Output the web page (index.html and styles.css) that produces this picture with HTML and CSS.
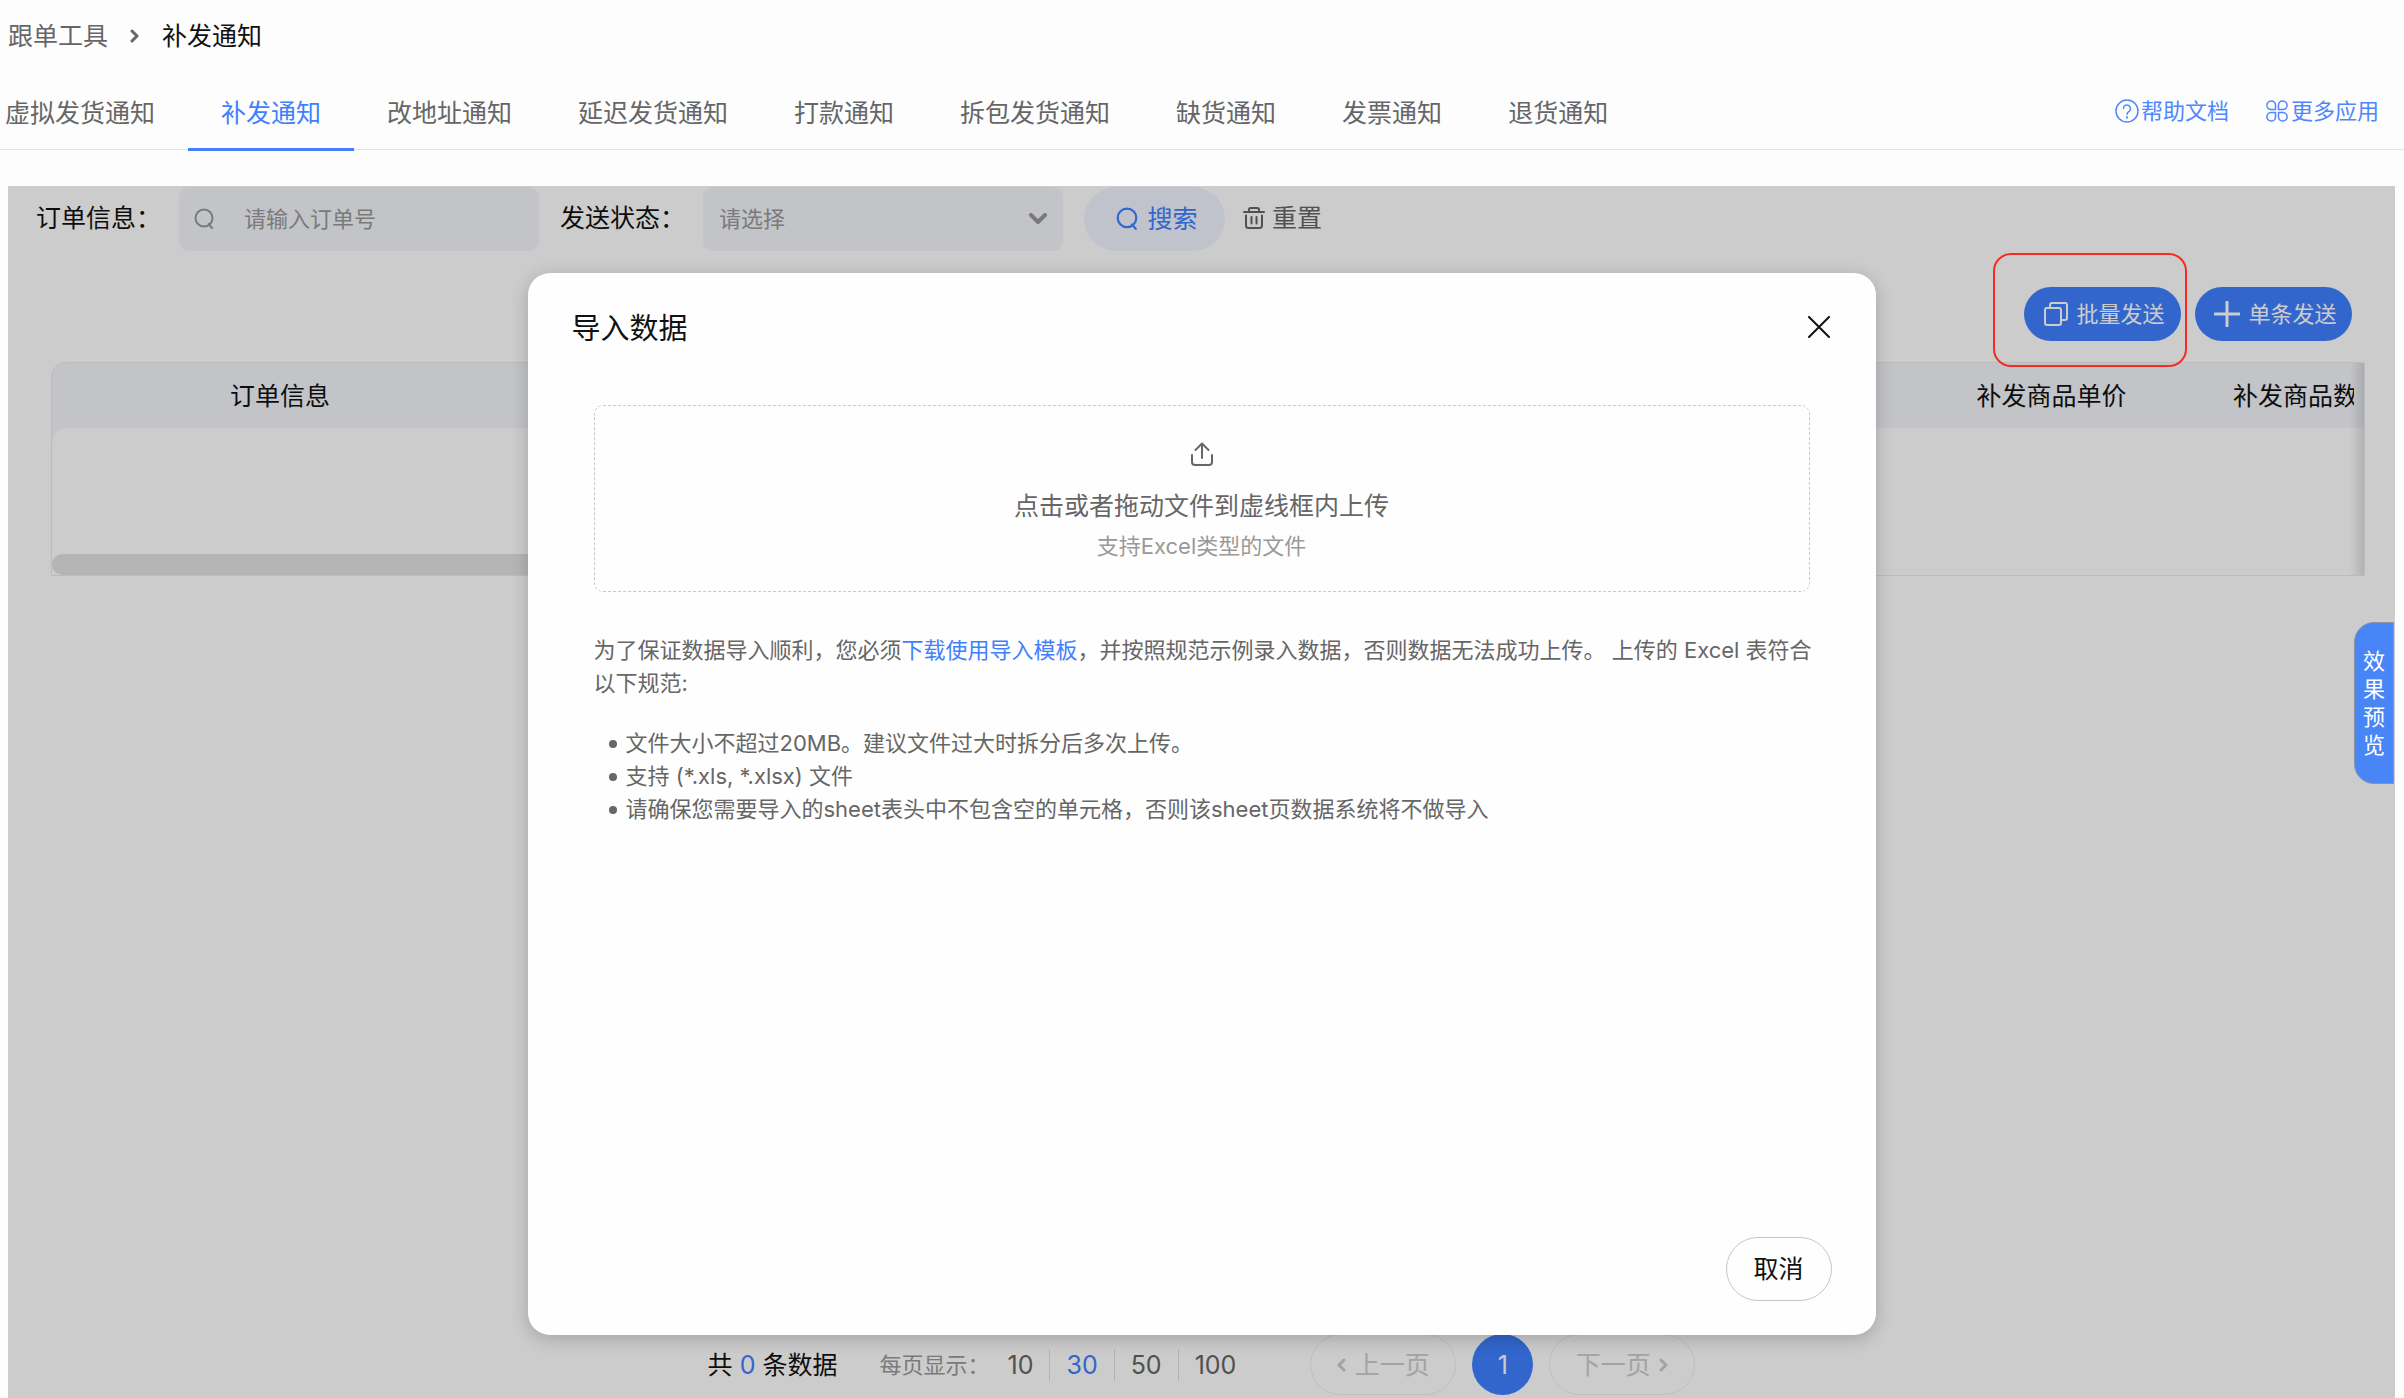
FILE: index.html
```
<!DOCTYPE html>
<html lang="zh-CN">
<head>
    <meta charset="UTF-8">
    <meta name="viewport" content="width=device-width, initial-scale=1.0">
    <title>补发通知</title>
    <link rel="stylesheet" href="styles.css">
</head>
<body>

<!-- Breadcrumb -->
<nav class="breadcrumb">
    <a href="#">跟单工具</a>
    <svg class="icon-arrow" viewBox="0 0 10 14"><path d="M2 2l5 5-5 5"/></svg>
    <span class="current">补发通知</span>
</nav>

<!-- Top tabs -->
<div class="tab-bar">
    <nav class="tabs">
        <a href="#" class="tab">虚拟发货通知</a>
        <a href="#" class="tab active">补发通知</a>
        <a href="#" class="tab">改地址通知</a>
        <a href="#" class="tab">延迟发货通知</a>
        <a href="#" class="tab">打款通知</a>
        <a href="#" class="tab">拆包发货通知</a>
        <a href="#" class="tab">缺货通知</a>
        <a href="#" class="tab">发票通知</a>
        <a href="#" class="tab">退货通知</a>
    </nav>
    <div class="tab-links">
        <a href="#">
            <svg class="icon-help" viewBox="0 0 24 24"><circle cx="12" cy="12" r="11"/><path d="M8.500 9.500a3.500 3.500 0 1 1 5.500 2.800c-1.300.9-2 1.500-2 3"/><path d="M12 17.500v1.800"/></svg>帮助文档
        </a>
        <a href="#">
            <svg class="icon-apps" viewBox="0 0 24 24"><path d="M10.500 10.500H6A4.300 4.300 0 1 1 10.500 6zM13.500 10.500V6A4.300 4.300 0 1 1 18 10.500zM10.500 13.500V18A4.300 4.300 0 1 1 6 13.500zM13.500 13.500H18A4.300 4.300 0 1 1 13.500 18z"/></svg>更多应用
        </a>
    </div>
</div>

<main class="panel">
    <!-- Filters -->
    <form class="filters">
        <label for="order-no">订单信息：</label>
        <div class="field search-field">
            <svg class="icon-search" viewBox="0 0 20 22"><circle cx="10" cy="10" r="8.500"/><path d="M14.500 16l3.500 4"/></svg>
            <input type="text" id="order-no" placeholder="请输入订单号">
        </div>
        <label for="status">发送状态：</label>
        <div class="field select-field">
            <select id="status">
                <option>请选择</option>
            </select>
            <svg class="icon-down" viewBox="0 0 18 12"><path d="M2 2l7 7 7-7"/></svg>
        </div>
        <button type="button" class="btn-search">
            <svg class="icon-search" viewBox="0 0 20 22"><circle cx="10" cy="10" r="8.500"/><path d="M14.500 16l3.500 4"/></svg>搜索
        </button>
        <button type="button" class="btn-reset">
            <svg class="icon-trash" viewBox="0 0 22 24"><path d="M1 6h20M6 6V3.500A1.500 1.500 0 0 1 7.500 2h7A1.500 1.500 0 0 1 16 3.500V6M3 9.500v10A2.500 2.500 0 0 0 5.500 22h11a2.500 2.500 0 0 0 2.500-2.500v-10M8.500 11v6.500M13.500 11v6.500"/></svg>重置
        </button>
    </form>

    <!-- Send buttons -->
    <div class="actions">
        <div class="marked">
            <button type="button" class="btn-primary">
                <svg class="icon-copy" viewBox="0 0 24 24"><rect x="1" y="6" width="16" height="17" rx="2"/><path d="M6 6V3a2 2 0 0 1 2-2h13a2 2 0 0 1 2 2v13a2 2 0 0 1-2 2h-4"/></svg>批量发送
            </button>
        </div>
        <button type="button" class="btn-primary">
            <svg class="icon-plus" viewBox="0 0 26 26"><path d="M13 1v24M1 13h24"/></svg>单条发送
        </button>
    </div>

    <!-- Order table -->
    <div class="table-box">
        <table>
            <colgroup>
                <col class="col-order">
                <col>
                <col class="col-price">
                <col class="col-count">
            </colgroup>
            <thead>
                <tr>
                    <th>订单信息</th>
                    <th></th>
                    <th>补发商品单价</th>
                    <th class="count"><div>补发商品数</div></th>
                </tr>
            </thead>
        </table>
        <div class="table-body">
            <div class="scroll-thumb"></div>
        </div>
    </div>

    <!-- Pagination -->
    <div class="pagination">
        <span class="total">共 <b>0</b> 条数据</span>
        <span class="size-label">每页显示：</span>
        <div class="sizes">
            <button type="button">10</button>
            <button type="button" class="active">30</button>
            <button type="button">50</button>
            <button type="button">100</button>
        </div>
        <div class="pager">
            <button type="button" class="step" disabled><svg class="icon-arrow" viewBox="0 0 10 14"><path d="M7 2L2 7l5 5"/></svg>上一页</button>
            <button type="button" class="page">1</button>
            <button type="button" class="step" disabled>下一页<svg class="icon-arrow" viewBox="0 0 10 14"><path d="M2 2l5 5-5 5"/></svg></button>
        </div>
    </div>

    <!-- Import dialog -->
    <div class="mask">
        <section class="dialog" role="dialog" aria-labelledby="dialog-title">
            <header class="dialog-header">
                <h2 id="dialog-title">导入数据</h2>
                <button type="button" class="btn-close" aria-label="关闭">
                    <svg viewBox="0 0 22 22"><path d="M1 1l20 20M21 1L1 21"/></svg>
                </button>
            </header>
            <div class="dialog-body">
                <label class="upload">
                    <input type="file" accept=".xls,.xlsx">
                    <svg viewBox="0 0 22 24"><path d="M11 16V2M4.500 8L11 1.500 17.500 8M1 13v7a3 3 0 0 0 3 3h14a3 3 0 0 0 3-3v-7"/></svg>
                    <span class="upload-title">点击或者拖动文件到虚线框内上传</span>
                    <span class="upload-tip">支持Excel类型的文件</span>
                </label>
                <div class="rules">
                    <p>为了保证数据导入顺利，您必须<a href="#">下载使用导入模板</a>，并按照规范示例录入数据，否则数据无法成功上传。 上传的 Excel 表符合以下规范:</p>
                    <ul>
                        <li>文件大小不超过20MB。建议文件过大时拆分后多次上传。</li>
                        <li>支持 (*.xls, *.xlsx) 文件</li>
                        <li>请确保您需要导入的sheet表头中不包含空的单元格，否则该sheet页数据系统将不做导入</li>
                    </ul>
                </div>
            </div>
            <footer class="dialog-footer">
                <button type="button" class="btn-cancel">取消</button>
            </footer>
        </section>
    </div>

    <button type="button" class="preview-tab">效果预览</button>
</main>

</body>
</html>
```

FILE: styles.css
```
* {
    box-sizing: border-box;
}

body {
    margin: 0;
    min-height: 100vh;
    display: flex;
    flex-direction: column;
    overflow: hidden;
    background-color: #fdfdfd;
    color: #111;
    font-family: Inter, "Noto Sans CJK SC", sans-serif;
    font-size: 25px;
    line-height: 36px;
}

a {
    color: inherit;
    text-decoration: none;
}

button,
input,
select {
    font: inherit;
    color: inherit;
    border: none;
    background: none;
    padding: 0;
    margin: 0;
}

button {
    display: flex;
    align-items: center;
    justify-content: center;
    white-space: nowrap;
    cursor: pointer;
}

svg {
    flex: none;
    fill: none;
    stroke: currentColor;
    stroke-width: 2;
    stroke-linecap: round;
    stroke-linejoin: round;
}

/* Breadcrumb */
.breadcrumb {
    height: 72px;
    padding-left: 8px;
    display: flex;
    align-items: center;
    gap: 22px;
    color: #666;
}

.breadcrumb .current {
    color: #111;
}

.icon-arrow {
    width: 10px;
    height: 14px;
    stroke-width: 3;
}

/* Tabs */
.tab-bar {
    height: 78px;
    display: flex;
    justify-content: space-between;
    border-bottom: 1px solid #e3e3e3;
}

.tabs {
    display: flex;
}

.tab {
    height: 79px;
    padding: 23px 33px 0;
    color: #666;
    border-bottom: 3px solid transparent;
    white-space: nowrap;
}

.tab:first-child {
    padding-left: 5px;
}

.tab.active {
    color: #4080ff;
    border-bottom-color: #4080ff;
}

.tab-links {
    display: flex;
    align-items: center;
    gap: 36px;
    padding-right: 25px;
    color: #4e86ff;
    font-size: 22px;
}

.tab-links a {
    display: flex;
    align-items: center;
    gap: 2px;
}

.icon-help,
.icon-apps {
    width: 24px;
    height: 24px;
    stroke-width: 1.5;
}

/* Main panel */
.panel {
    position: relative;
    flex: 1;
    margin: 36px 9px 0 8px;
    display: flex;
    flex-direction: column;
    background-color: #fff;
}

.filters {
    display: flex;
    align-items: center;
    padding-left: 28px;
    height: 65px;
}

.filters label {
    padding-bottom: 2px;
}

.field {
    display: flex;
    align-items: center;
    width: 360px;
    height: 64px;
    margin: 0 21px 0 18px;
    padding: 0 16px;
    border-radius: 10px;
    background-color: #f3f5fb;
    color: #999;
    font-size: 22px;
}

.field input,
.field select {
    flex: 1;
    min-width: 0;
    height: 100%;
    appearance: none;
    outline: none;
}

.field input::placeholder {
    color: #999;
    opacity: 1;
}

.search-field {
    padding-left: 15px;
    gap: 30px;
}

.icon-search {
    width: 20px;
    height: 22px;
}

.icon-down {
    width: 18px;
    height: 12px;
    stroke-width: 4;
}

.btn-search {
    width: 141px;
    height: 64px;
    padding-left: 4px;
    gap: 10px;
    border-radius: 32px;
    background-color: #f0f4ff;
    color: #4080ff;
}

.btn-search .icon-search {
    width: 22px;
    height: 24px;
}

.btn-reset {
    margin-left: 18px;
    padding-bottom: 2px;
    gap: 7px;
    color: #666;
}

.icon-trash {
    width: 22px;
    height: 24px;
}

.actions {
    display: flex;
    justify-content: flex-end;
    gap: 14px;
    padding: 36px 43px 21px;
}

.btn-primary {
    width: 157px;
    height: 54px;
    padding-left: 4px;
    gap: 8px;
    border-radius: 27px;
    background-color: #3f80ff;
    color: #fff;
    font-size: 22px;
}

.icon-copy {
    width: 24px;
    height: 24px;
}

.icon-plus {
    width: 26px;
    height: 26px;
    stroke-width: 3;
}

/* Red frame around the batch button, shown above the mask */
.marked {
    position: relative;
}

.marked::after {
    content: "";
    position: absolute;
    inset: -34px -6px -26px -31px;
    border: 2px solid #f52b24;
    border-radius: 18px;
    pointer-events: none;
    z-index: 3;
}

/* Table */
.table-box {
    position: relative;
    margin: 0 30px 0 43px;
    border: 1px solid #ececee;
    border-radius: 15px 0 0 0;
    background-color: #f3f5fb;
    overflow: hidden;
}

.table-box::after {
    content: "";
    position: absolute;
    top: 0;
    right: 0;
    bottom: 0;
    width: 14px;
    background: linear-gradient(to right, rgba(0, 0, 0, 0), rgba(0, 0, 0, 0.12));
}

table {
    width: 100%;
    table-layout: fixed;
    border-collapse: collapse;
}

.col-order {
    width: 456px;
}

.col-price {
    width: 257px;
}

.col-count {
    width: 184px;
}

th {
    height: 65px;
    padding: 0;
    font-weight: normal;
    white-space: nowrap;
}

th.count {
    padding: 0 10px 0 53px;
    text-align: left;
}

th.count div {
    overflow: hidden;
}

.table-body {
    height: 147px;
    display: flex;
    align-items: flex-end;
    border-radius: 15px 0 0 0;
    background-color: #fff;
}

.scroll-thumb {
    width: 70%;
    height: 21px;
    border-radius: 11px;
    background-color: #e3e3e3;
}

/* Pagination */
.pagination {
    display: flex;
    align-items: center;
    justify-content: center;
    margin-top: auto;
    padding-bottom: 3px;
}

.total b {
    color: #4080ff;
    font-weight: normal;
}

.size-label {
    margin-left: 42px;
    color: #999;
    font-size: 22px;
}

.sizes {
    display: flex;
    margin-left: 2px;
    color: #666;
}

.sizes button {
    height: 32px;
    padding: 0 16px;
    border-left: 1px solid #e0e0e0;
}

.sizes button:first-child {
    border-left: none;
}

.sizes .active {
    color: #4080ff;
}

.pager {
    display: flex;
    gap: 16px;
    margin-left: 58px;
}

.step {
    width: 146px;
    height: 61px;
    gap: 8px;
    border: 1px solid #f0f0f0;
    border-radius: 31px;
    color: #ccc;
}

.page {
    width: 61px;
    height: 61px;
    border-radius: 50%;
    background-color: #3f80ff;
    color: #fff;
}

/* Import dialog */
.mask {
    position: absolute;
    inset: 0;
    z-index: 2;
    display: flex;
    justify-content: center;
    padding: 87px 0 63px;
    background-color: rgba(0, 0, 0, 0.2);
}

.dialog {
    width: 1348px;
    max-width: 90%;
    display: flex;
    flex-direction: column;
    padding: 36px 44px 34px;
    border-radius: 22px;
    background-color: #fefefe;
    box-shadow: 0 4px 18px rgba(0, 0, 0, 0.2);
}

.dialog-header {
    display: flex;
    align-items: center;
    justify-content: space-between;
}

.dialog-header h2 {
    margin: 0;
    font-size: 29px;
    font-weight: normal;
    line-height: 40px;
}

.btn-close {
    width: 26px;
    height: 32px;
    padding-bottom: 4px;
}

.btn-close svg {
    width: 22px;
    height: 22px;
}

.dialog-body {
    flex: 1;
    padding: 56px 0 0 22px;
    color: #666;
    font-size: 22px;
    line-height: 33px;
}

.upload {
    display: flex;
    flex-direction: column;
    align-items: center;
    height: 187px;
    margin-right: 22px;
    padding-top: 36px;
    border: 1px dashed #c8c8c8;
    border-radius: 9px;
    cursor: pointer;
}

.upload input {
    position: absolute;
    width: 1px;
    height: 1px;
    opacity: 0;
}

.upload svg {
    width: 22px;
    height: 24px;
}

.upload-title {
    margin-top: 20px;
    font-size: 25px;
    line-height: 40px;
}

.upload-tip {
    margin-top: 4px;
    color: #999;
}

.rules {
    padding-top: 42px;
}

.rules p {
    margin: 0;
}

.rules a {
    color: #4080ff;
}

.rules ul {
    margin: 27px 0 0;
    padding: 0 0 0 15px;
    list-style: none;
}

.rules li {
    display: flex;
    align-items: center;
    gap: 9px;
}

.rules li::before {
    content: "";
    width: 8px;
    height: 8px;
    border-radius: 50%;
    background-color: #666;
}

.dialog-footer {
    display: flex;
    justify-content: flex-end;
}

.btn-cancel {
    width: 106px;
    height: 64px;
    border: 1px solid #c6c6d2;
    border-radius: 32px;
}

/* Preview tab on the right edge */
.preview-tab {
    position: absolute;
    top: 436px;
    right: 1px;
    z-index: 3;
    width: 40px;
    height: 162px;
    padding: 0 8px;
    border: 1px solid #8c93a5;
    border-radius: 20px 0 0 20px;
    background-color: #4886f7;
    color: #fff;
    font-size: 22px;
    line-height: 28px;
    white-space: normal;
}
```
